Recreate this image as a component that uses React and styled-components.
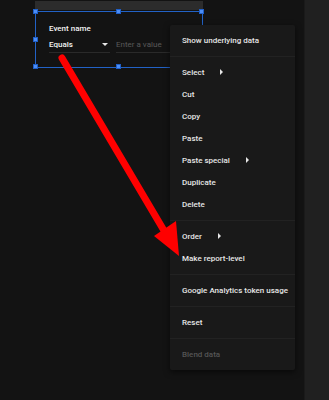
import React from 'react';
import styled, { createGlobalStyle } from 'styled-components';

const GlobalStyle = createGlobalStyle`
    html, body {
        margin: 0;
        padding: 0;
        background: #131313;
    }
    body {
        font-family: Roboto, "Noto Sans", Arial, sans-serif;
        -webkit-font-smoothing: antialiased;
    }
`;

const menuSections = [
    [{ label: 'Show underlying data' }],
    [
        { label: 'Select', sub: true },
        { label: 'Cut' },
        { label: 'Copy' },
        { label: 'Paste' },
        { label: 'Paste special', sub: true },
        { label: 'Duplicate' },
        { label: 'Delete' },
    ],
    [{ label: 'Order', sub: true }, { label: 'Make report-level' }],
    [{ label: 'Google Analytics token usage' }],
    [{ label: 'Reset' }],
    [{ label: 'Blend data', disabled: true }],
];

const handles = [
    { x: 0, y: 0 },
    { x: 50, y: 0 },
    { x: 100, y: 0 },
    { x: 0, y: 50 },
    { x: 100, y: 50 },
    { x: 0, y: 100 },
    { x: 50, y: 100 },
    { x: 100, y: 100 },
];

const App = () => {
    return (
        <>
            <GlobalStyle />
            <Page>
                <Canvas>
                    <Widget>
                        <HeaderBar />
                        <SelectionFrame>
                            {handles.map((h, i) => (
                                <Handle key={i} $x={h.x} $y={h.y} />
                            ))}
                            <FieldLabel>Event name</FieldLabel>
                            <FieldRow>
                                <SelectField>
                                    Equals
                                    <Caret />
                                </SelectField>
                                <InputField>Enter a value</InputField>
                            </FieldRow>
                        </SelectionFrame>
                    </Widget>

                    <ContextMenu>
                        {menuSections.map((section, si) => (
                            <MenuSection key={si} $first={si === 0}>
                                {section.map((item) => (
                                    <MenuItem key={item.label} $disabled={item.disabled}>
                                        {item.label}
                                        {item.sub && <SubArrow />}
                                    </MenuItem>
                                ))}
                            </MenuSection>
                        ))}
                    </ContextMenu>

                    <ArrowLayer viewBox="0 0 306 400" width="306" height="400">
                        <line x1="62" y1="58" x2="166" y2="234" stroke="#ff0000" strokeWidth="7" strokeLinecap="round" />
                        <polygon points="179,256 154,236 176,221" fill="#ff0000" />
                    </ArrowLayer>
                </Canvas>
                <SidePanel />
            </Page>
        </>
    );
};

const Page = styled.div`
    display: flex;
    width: 329px;
    height: 400px;
    background: #131313;
    overflow: hidden;
`;

const Canvas = styled.div`
    position: relative;
    flex: 1;
`;

const SidePanel = styled.div`
    width: 24px;
    background: #202020;
    border-left: 1px solid #1a1a1a;
`;

const Widget = styled.div`
    margin-left: 35px;
    width: 168px;
`;

const HeaderBar = styled.div`
    height: 9px;
    margin: 1px 0;
    background: #2c2c2c;
`;

const SelectionFrame = styled.div`
    position: relative;
    box-sizing: border-box;
    height: 57px;
    padding: 12px 13px 0;
    border: 1px solid #2262c6;
`;

const Handle = styled.span`
    position: absolute;
    left: calc(${(p) => p.$x}% - 3px);
    top: calc(${(p) => p.$y}% - 3px);
    width: 5px;
    height: 5px;
    background: #4c8df5;
    border: 0.5px solid #1f5fc8;
    box-sizing: border-box;
`;

const FieldLabel = styled.div`
    height: 10px;
    line-height: 10px;
    font-size: 8px;
    font-weight: 500;
    color: #f2f2f2;
`;

const FieldRow = styled.div`
    display: flex;
    gap: 6px;
    margin-top: 3px;
`;

const fieldBase = `
    height: 15px;
    line-height: 15px;
    font-size: 8px;
    border-bottom: 1px solid #2a2a2a;
`;

const SelectField = styled.div`
    ${fieldBase}
    position: relative;
    width: 61px;
    font-weight: 500;
    color: #f2f2f2;
`;

const Caret = styled.span`
    position: absolute;
    left: 53px;
    top: 6px;
    width: 0;
    height: 0;
    border-left: 3px solid transparent;
    border-right: 3px solid transparent;
    border-top: 3px solid #e8e8e8;
`;

const InputField = styled.div`
    ${fieldBase}
    flex: 1;
    color: #595959;
`;

const ContextMenu = styled.div`
    position: absolute;
    left: 170px;
    top: 25px;
    width: 125px;
    background: #191919;
    border-radius: 2px;
    box-shadow: 0 2px 6px rgba(0, 0, 0, 0.6);
    z-index: 2;
`;

const MenuSection = styled.div`
    padding: 4px 0 5px;
    border-top: ${(p) => (p.$first ? 'none' : '1px solid #222222')};
`;

const MenuItem = styled.div`
    display: flex;
    align-items: center;
    height: 22px;
    padding-left: 12px;
    font-size: 8px;
    font-weight: 500;
    color: ${(p) => (p.$disabled ? '#555555' : '#e6e6e6')};
    white-space: nowrap;
`;

const SubArrow = styled.span`
    margin-left: 16px;
    width: 0;
    height: 0;
    border-top: 3px solid transparent;
    border-bottom: 3px solid transparent;
    border-left: 3px solid #e6e6e6;
`;

const ArrowLayer = styled.svg`
    position: absolute;
    left: 0;
    top: 0;
    pointer-events: none;
    z-index: 3;
`;

export default App;
